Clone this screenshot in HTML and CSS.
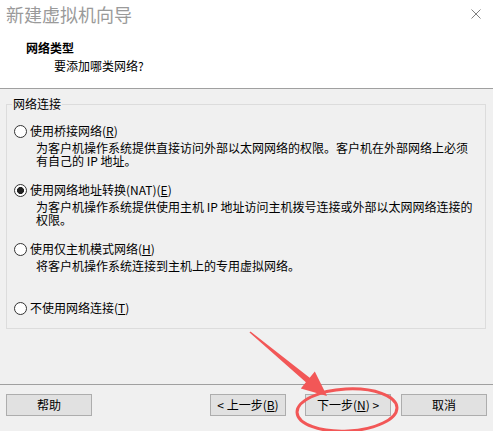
FILE: index.html
```html
<!DOCTYPE html>
<html lang="zh-CN">
<head>
  <meta charset="UTF-8" />
  <title>新建虚拟机向导</title>
  <link rel="stylesheet" href="styles.css">
</head>
<body>

<div class="window">
  <div class="titlebar">
    <span class="title">新建虚拟机向导</span>
    <svg class="close" width="10" height="10" viewBox="0 0 10 10">
      <path d="M0.5 0.5 L9.5 9.5 M9.5 0.5 L0.5 9.5" stroke="#808080" stroke-width="1" fill="none" />
    </svg>
  </div>

  <div class="header">
    <div class="header-title">网络类型</div>
    <div class="header-sub">要添加哪类网络?</div>
  </div>

  <div class="content">
    <fieldset class="group">
      <legend>网络连接</legend>
      <div class="options">
        <div class="option">
          <div class="radio-row"><span class="radio"></span>使用桥接网络(<u>R</u>)</div>
          <p class="desc">为客户机操作系统提供直接访问外部以太网网络的权限。客户机在外部网络上必须有自己的 IP 地址。</p>
        </div>
        <div class="option">
          <div class="radio-row"><span class="radio checked"></span>使用网络地址转换(NAT)(<u>E</u>)</div>
          <p class="desc">为客户机操作系统提供使用主机 IP 地址访问主机拨号连接或外部以太网网络连接的权限。</p>
        </div>
        <div class="option">
          <div class="radio-row"><span class="radio"></span>使用仅主机模式网络(<u>H</u>)</div>
          <p class="desc tall">将客户机操作系统连接到主机上的专用虚拟网络。</p>
        </div>
        <div class="option">
          <div class="radio-row"><span class="radio"></span>不使用网络连接(<u>T</u>)</div>
        </div>
      </div>
    </fieldset>
  </div>

  <div class="footer">
    <button class="btn">帮助</button>
    <button class="btn btn-back">&lt; 上一步(<u>B</u>)</button>
    <button class="btn">下一步(<u>N</u>) &gt;</button>
    <button class="btn">取消</button>
  </div>

  <!-- red annotation drawn over the dialog -->
  <svg class="annotation" width="493" height="431" viewBox="0 0 493 431">
    <polygon points="249.5,332.5 250.5,331.5 309.7,377.7 314.8,371.5 327,396 300.8,388.5 305.9,382.3" fill="#f25757" />
    <ellipse cx="347" cy="410" rx="50" ry="21" fill="none" stroke="#f25757" stroke-width="3" transform="rotate(-3 347 410)" />
  </svg>
</div>

</body>
</html>
```

FILE: styles.css
```css
body {
  margin: 0;
  font-family: "Noto Sans CJK SC", "Liberation Sans", sans-serif;
  font-size: 12px;
  color: #000;
}
.window {
  position: relative;
  width: 493px; height: 431px;
  display: flex; flex-direction: column;
  background: #f0f0f0;
  overflow: hidden;
}
.titlebar {
  height: 28px; background: #fff;
  display: flex; align-items: center; justify-content: space-between;
  padding: 0 12px 0 6px;
}
.title { font-size: 18px; line-height: 28px; color: #9a9a9a; }
.close { display: block; }

.header {
  height: 60px; background: #fff;
  border-bottom: 1px solid #a0a0a0;
}
.header-title { font-weight: bold; line-height: 16px; padding: 12px 0 0 26px; }
.header-sub { line-height: 16px; margin-top: 2px; padding-left: 54px; }

.content { flex: 1; padding: 8px 7px 0 6px; }
.group {
  margin: 0; height: 232px; box-sizing: border-box;
  border: 1px solid #dcdcdc;
  padding: 12px 7px 0;
}
.group legend { padding: 0 1px; margin-left: -2px; line-height: 14px; }

.options { display: flex; flex-direction: column; gap: 15px; }
.radio-row { display: flex; align-items: center; line-height: 16px; }
.radio {
  width: 13px; height: 13px; box-sizing: border-box;
  border: 1px solid #333; border-radius: 50%;
  background: #fff; margin-right: 3px; flex-shrink: 0;
}
.radio.checked { background: radial-gradient(circle, #222 3.2px, #fff 3.8px); }
.desc { margin: 2px 0 0 22px; line-height: 13px; }
.desc.tall { min-height: 26px; }

.footer {
  height: 37px;
  border-top: 1px solid #a0a0a0;
  display: flex; align-items: flex-start; gap: 10px;
  padding: 9px 6px 0;
}
.btn {
  width: 86px; height: 22px; padding: 0;
  background: #e1e1e1; border: 1px solid #adadad;
  font-family: inherit; font-size: 12px; color: #000;
  line-height: 20px;
}
.btn-back { width: 76px; margin-left: auto; margin-right: 9px; }

.annotation { position: absolute; left: 0; top: 0; pointer-events: none; }
```
